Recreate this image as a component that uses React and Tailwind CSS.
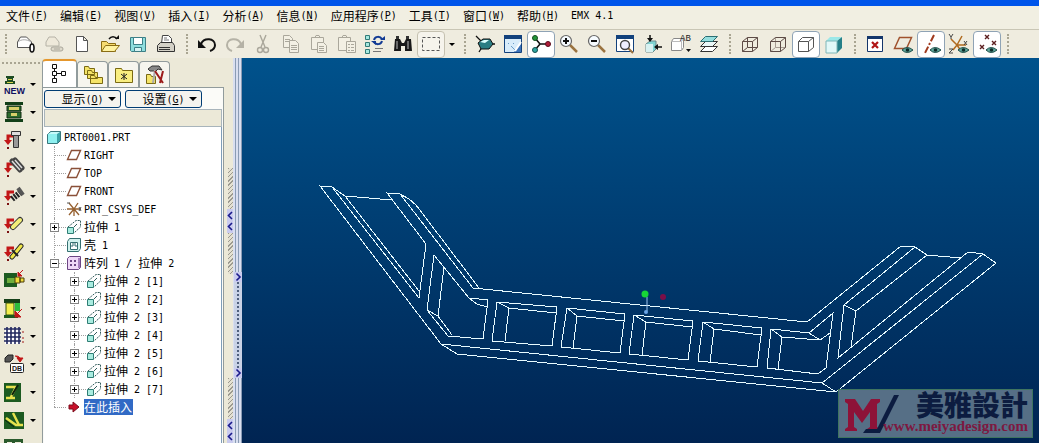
import clsx from 'clsx'

// 22x22 drawings for the top toolbar
const icons = {
  recall: (
    <>
      <path d="M2.500 14.500V9l3-5h6l5 5v5.500z" fill="#fff" stroke="#555" />
      <path d="M3 9c3-3 9-3 13 0" fill="none" stroke="#aaa" />
      <ellipse cx="17" cy="15" rx="2" ry="4" fill="#fff" stroke="#111" strokeWidth="1.600" />
    </>
  ),
  link: (
    <>
      <path d="M3 13V9l3-5h6l4 5v4z" fill="#eee9da" stroke="#b5b2a6" />
      <rect x="8" y="14" width="12" height="4" rx="2" fill="#ddd9cb" stroke="#aaa79b" />
      <path d="M11 16h6" stroke="#aaa79b" />
    </>
  ),
  page: <path d="M5.500 3.500h7l4 4v11h-11zM12.500 3.500v4h4" fill="#fff" stroke="#555" />,
  open: (
    <>
      <path d="M2.500 18.500V8.500h5l2 2h7v8z" fill="#f7dc70" stroke="#8a6d14" />
      <path d="M2.500 18.500l4-6h14l-5 6z" fill="#fff3a0" stroke="#8a6d14" />
      <path d="M10 6c2-3 6-3 8 0" fill="none" stroke="#111" strokeWidth="1.400" />
      <path d="M16 6h4v-4z" fill="#111" />
    </>
  ),
  save: (
    <>
      <path d="M3.500 4.500h15v14h-14l-1-1z" fill="#8fdede" stroke="#3d7f86" />
      <path d="M6.500 4.500h9v7h-9z" fill="#fff" stroke="#3d7f86" />
      <path d="M7.500 14.500h7v4h-7z" fill="#d7f3f3" stroke="#3d7f86" />
    </>
  ),
  print: (
    <>
      <path d="M6.500 10.500l1-8h6l3 3v5z" fill="#fff" stroke="#444" />
      <path d="M9 5h3M9 7h5" stroke="#777" />
      <path d="M2.500 12.500l3-3h12l2 3v6h-17z" fill="#d4d1c7" stroke="#333" />
      <path d="M4 14.500h11M4 16.500h11" stroke="#333" />
    </>
  ),
  undo: (
    <>
      <path d="M5 11c3-7 14-6 14 1 0 3-2 5-5 6" fill="none" stroke="#111" strokeWidth="2" />
      <path d="M2 7v8h8z" fill="#111" />
    </>
  ),
  redo: (
    <>
      <path d="M17 11c-3-7-14-6-14 1 0 3 2 5 5 6" fill="none" stroke="#b5b2a6" strokeWidth="2" />
      <path d="M20 7v8h-8z" fill="#b5b2a6" />
    </>
  ),
  cut: (
    <g fill="none" stroke="#aaa79b" strokeWidth="1.400">
      <path d="M8 2l5 12M14 2L9 14" />
      <circle cx="8" cy="17" r="2.500" />
      <circle cx="14" cy="17" r="2.500" />
    </g>
  ),
  copy: (
    <g fill="#f3f0e4" stroke="#aaa79b">
      <path d="M3.500 2.500h6l3 3v9h-9zM5 6.500h5M5 8.500h5" />
      <path d="M9.500 7.500h6l3 3v9h-9zM11 12.500h6M11 14.500h6M11 16.500h6" />
    </g>
  ),
  paste: (
    <g fill="#f3f0e4" stroke="#aaa79b">
      <path d="M3.500 4.500h12v12h-12zM7 4.500l1-2h3l1 2z" />
      <path d="M9.500 9.500h6l3 3v7h-9zM11 13.500h5M11 15.500h5M11 17.500h5" />
    </g>
  ),
  pasteSpecial: (
    <g fill="#f3f0e4" stroke="#aaa79b">
      <path d="M2.500 4.500h12v13h-12zM6 4.500l1-2h3l1 2z" />
      <path d="M10.500 8.500h9v11h-9zM12 11.500h2M15 11.500h3M12 14.500h2M15 14.500h3M12 17.500h2M15 17.500h3" />
    </g>
  ),
  regen: (
    <>
      <path d="M1.500 2.500h4v4h-4zM1.500 9.500h4v4h-4zM1.500 16.500h4v4h-4z" fill="#a6e8df" stroke="#317b78" />
      <path d="M10 7c1-4 6-4 8-1M18 8c-1 4-6 4-8 1" fill="none" stroke="#123a94" strokeWidth="2" />
      <path d="M16 7h5V3zM7 8h5v4z" fill="#123a94" />
      <path d="M11 15.500h8M9 18.500h8" stroke="#777" />
    </>
  ),
  find: (
    <>
      <path d="M3 6h5l2 4h2l2-4h5l1 12h-7v-5h-4v5H2z" fill="#181818" />
      <path d="M4 3h3v3H4zM14 3h3v3h-3z" fill="#333" />
      <path d="M5 8v8M16 8v8" stroke="#bbb" />
    </>
  ),
  select: <path d="M2.500 4.500h17v13h-17z" fill="none" stroke="#555" strokeDasharray="3 2" />,
  spin: (
    <>
      <path d="M2 3l6 6M5 19l5-8M14 11h7" stroke="#111" strokeWidth="1.300" />
      <path d="M4 10l5-4h7l3 5-4 5H7z" fill="#2a7d83" stroke="#111" />
      <path d="M6 9l4-2h5l-4 3z" fill="#dff" />
    </>
  ),
  sketch: (
    <>
      <path d="M2.500 3.500h17v16h-17z" fill="#d8ecfa" stroke="#12417c" />
      <path d="M2 2h18v4H2z" fill="#12417c" />
      <path d="M12 19L19 11v8z" fill="#3c73b8" />
      <path d="M6 10l1 1M9 13l5 5M12 10l-1 1" stroke="#6a9cc8" />
      <path d="M13 18l6-9" stroke="#fff" strokeWidth="2" />
    </>
  ),
  spinCenter: (
    <>
      <path d="M5 5l5 6M5 17l5-6h8" fill="none" stroke="#111" strokeWidth="1.600" />
      <circle cx="5" cy="5" r="2.500" fill="#24953a" stroke="#134d1e" />
      <circle cx="5" cy="17" r="2.500" fill="#2ea5a0" stroke="#134d4d" />
      <circle cx="18" cy="11" r="2.500" fill="#b01c38" stroke="#5a0d1c" />
    </>
  ),
  zoomIn: (
    <>
      <path d="M12 12l7 7" stroke="#9a7340" strokeWidth="2.500" />
      <circle cx="8" cy="8" r="5.500" fill="#f6fbff" stroke="#666" strokeWidth="1.200" />
      <path d="M5 8h6M8 5v6" stroke="#111" strokeWidth="2" />
    </>
  ),
  zoomOut: (
    <>
      <path d="M12 12l7 7" stroke="#9a7340" strokeWidth="2.500" />
      <circle cx="8" cy="8" r="5.500" fill="#f6fbff" stroke="#666" strokeWidth="1.200" />
      <path d="M5 8h6" stroke="#111" strokeWidth="2" />
    </>
  ),
  refit: (
    <>
      <path d="M2.500 3.500h17v15h-17z" fill="#fff" stroke="#12417c" />
      <path d="M2 2h18v4H2z" fill="#12417c" />
      <path d="M14 15l5 5" stroke="#9a7340" strokeWidth="2" />
      <circle cx="11" cy="12" r="4.500" fill="#eef" stroke="#444" strokeWidth="1.400" />
    </>
  ),
  orient: (
    <>
      <path d="M4 11l4-3h6v8l-3 3H4z" fill="#80d4d2" stroke="#6b8a8d" />
      <path d="M4 11h7v8H4z" fill="#d8f1f1" />
      <path d="M8 2v6M20 14h-6" stroke="#111" strokeWidth="1.500" />
      <path d="M5 5h6L8 9zM16 11v6l-4-3z" fill="#111" />
    </>
  ),
  views: (
    <>
      <path d="M1.500 8.500l2-3h10v9l-2 3h-10z" fill="#fff" stroke="#888" />
      <path d="M11.500 17.500v-9h-10M11.500 8.500l2-3" fill="none" stroke="#bbb" />
      <text x="10" y="8" fontSize="9" fill="#222" fontFamily="Liberation Mono, monospace">
        AB
      </text>
      <path d="M16 16h5l-2.500 3z" fill="#111" />
    </>
  ),
  layers: (
    <>
      <path d="M2.500 18.500l5-5h12l-5 5z" fill="#fff" stroke="#333" />
      <path d="M2.500 13.500l5-5h12l-5 5z" fill="#eaf7f7" stroke="#333" />
      <path d="M2.500 8.500l5-5h12l-5 5z" fill="#96dede" stroke="#2c6f73" />
    </>
  ),
  wireframe: (
    <path
      d="M3.500 8.500h10v10h-10zM8.500 4.500h10v10h-10zM3.500 8.500l5-4M13.500 8.500l5-4M3.500 18.500l5-4M13.500 18.500l5-4"
      fill="none"
      stroke="#5d4b46"
    />
  ),
  hiddenLine: (
    <>
      <path d="M8.500 4.500v10h10M3.500 18.500l5-4" fill="none" stroke="#a69b92" />
      <path d="M3.500 8.500h10v10h-10zM3.500 8.500l5-4h10v10l-5 4M13.500 8.500l5-4" fill="none" stroke="#5d4b46" />
    </>
  ),
  noHidden: <path d="M3.500 8.500h10v10h-10zM3.500 8.500l4-4h11v10l-5 4M13.500 8.500l5-4" fill="none" stroke="#555" />,
  shaded: (
    <>
      <path d="M3 8l4-4h12l-5 4z" fill="#9ce8e8" />
      <path d="M14 8l5-4v11l-5 5z" fill="#257f88" />
      <path d="M3 8h11v12H3z" fill="#e2f8f8" stroke="#7fb6b8" />
    </>
  ),
  closeWindow: (
    <>
      <path d="M3.500 3.500h15v15h-15z" fill="#fff" stroke="#14366b" />
      <path d="M3 3h16v3H3z" fill="#14366b" />
      <path d="M8 9l6 6M14 9l-6 6" stroke="#b01414" strokeWidth="2.200" />
    </>
  ),
  datumPlane: <path d="M2.500 15.500l5-11h12l-5 11z" fill="none" stroke="#a0522d" strokeWidth="1.500" />,
  datumAxis: <path d="M14 2L5 20" stroke="#a03a1e" strokeWidth="2" strokeDasharray="7 2 2 2" />,
  datumCsys: (
    <>
      <path d="M9 12l5-9M9 12L3 6M9 12h9M9 12l-4 5M9 12l4 6" stroke="#b06a1e" strokeWidth="1.500" />
      <path d="M1 1l2 3 2-3M3 4v2M16 8l3 4M19 8l-3 4M1 16h4l-4 4h4" fill="none" stroke="#444" />
    </>
  ),
  datumPoint: (
    <path
      d="M9 2l4 4M13 2L9 6M4 12l4 4M8 12l-4 4M16 8l4 4M20 8l-4 4"
      stroke="#5c1f1f"
      strokeWidth="1.400"
    />
  ),
}

const eye = (
  <>
    <path d="M10 17q5-5 11 0-6 5-11 0z" fill="#5fa79c" stroke="#1d4d48" />
    <circle cx="15.500" cy="17" r="1.800" fill="#0c2b28" />
  </>
)

const redHook = (
  <>
    <path d="M4 13V7h6" fill="none" stroke="#c21717" strokeWidth="3" />
    <path d="M0 11h8l-4 5z" fill="#c21717" />
    <path d="M3 18h2v2H3z" fill="#7a1010" />
  </>
)

// drawings for the mold-base bar on the left
const moldIcons = [
  {
    name: 'New project',
    art: (
      <>
        <path d="M2 3h8v2H2zM3 5h6v3H3zM1 8h10v3H1z" fill="#1e4c22" />
        <path d="M4 6h4v1H4zM3 9h6v1H3z" fill="#d6d34e" />
        <text x="0" y="21" fontSize="9" fontWeight="bold" fill="#101060" fontFamily="Liberation Sans, sans-serif">
          NEW
        </text>
      </>
    ),
  },
  {
    name: 'Mold base',
    art: (
      <>
        <path d="M1 1h18v3H1zM1 18h18v3H1z" fill="#123f18" />
        <path d="M3 5h14v5H3zM3 11h14v6H3z" fill="#2c6a2d" stroke="#102c12" />
        <path d="M5 6h10v3H5zM7 12h6v3H7z" fill="#d8cf6a" />
      </>
    ),
  },
  {
    name: 'Screw',
    art: (
      <>
        {redHook}
        <path d="M7.500 2.500h9v4h-9z" fill="#ddd" stroke="#333" />
        <path d="M9.500 6.500h5v12h-5z" fill="#999" stroke="#333" />
      </>
    ),
  },
  {
    name: 'Dowel pin',
    art: (
      <>
        {redHook}
        <path d="M8 4l8 9M11 3l7 8" stroke="#444" strokeWidth="5" strokeLinecap="round" />
        <path d="M8 4l8 9M11 3l7 8" stroke="#ddd" strokeWidth="1.500" />
      </>
    ),
  },
  {
    name: 'Ejector pin',
    art: (
      <>
        {redHook}
        <path d="M8 14L17 7" stroke="#222" strokeWidth="6" strokeDasharray="2 1" />
        <path d="M14 3l5 7" stroke="#555" strokeWidth="4" />
      </>
    ),
  },
  {
    name: 'Core pin',
    art: (
      <>
        {redHook}
        <path d="M9 14l7-7" stroke="#333" strokeWidth="6" strokeLinecap="round" />
        <path d="M9 14l7-7" stroke="#f2ee78" strokeWidth="4" strokeLinecap="round" />
      </>
    ),
  },
  {
    name: 'Sleeve',
    art: (
      <>
        {redHook}
        <path d="M8 16l9-11" stroke="#222" strokeWidth="5" strokeLinecap="round" />
        <path d="M8 16l9-11" stroke="#efe648" strokeWidth="3" strokeLinecap="round" />
        <path d="M8 9l6 6" stroke="#222" strokeWidth="2" />
      </>
    ),
  },
  {
    name: 'Slider',
    art: (
      <>
        <path d="M0 4h13v14H0z" fill="#1c5a20" />
        <path d="M3 9h8v5H3z" fill="#6fae3c" />
        <path d="M11 8h5v6h-5zM16 9h4v4h-4z" fill="#f0dc3c" stroke="#4b3c08" />
        <path d="M19 1l-4 4M14 3v4h4z" fill="#c21717" stroke="#c21717" />
      </>
    ),
  },
  {
    name: 'Lifter',
    art: (
      <>
        <path d="M0 2h16v4H0z" fill="#153f18" />
        <path d="M2 6h8v12H2z" fill="#f4ef4e" stroke="#36520f" />
        <path d="M11 6h5v8h-5z" fill="#2dbd3d" />
        <path d="M0 18h14v3H0z" fill="#1c5a20" />
        <path d="M18 12l-5 5M11 14v6h6z" fill="#c21717" stroke="#c21717" />
      </>
    ),
  },
  {
    name: 'Cooling',
    art: (
      <>
        <path d="M1 3h15v16H1z" fill="#fff" />
        <path d="M0 4h17M0 8h17M0 12h17M0 16h17M3 2v17M7 2v17M11 2v17M15 2v17" stroke="#22285f" strokeWidth="1.600" />
        <path d="M18 7h2M18 13h2M18 17h2" stroke="#a01818" />
      </>
    ),
  },
  {
    name: 'Database',
    art: (
      <>
        <path d="M1 5l3-3h5v4L6 9H1z" fill="#555" stroke="#222" />
        <path d="M11 3c4 0 5 1 5 4M13 5h6l-3 4z" fill="#c21717" stroke="#c21717" />
        <rect x="6.500" y="10.500" width="13" height="9" rx="1" fill="#fff" stroke="#222" />
        <text x="8" y="18" fontSize="7" fontWeight="bold" fill="#222" fontFamily="Liberation Sans, sans-serif">
          DB
        </text>
      </>
    ),
  },
  {
    name: 'Open mold',
    art: (
      <>
        <path d="M0 2h17v19H0z" fill="#1c5a20" />
        <path d="M2 6h10L7 16M2 17h9" fill="none" stroke="#e6e24e" strokeWidth="2.500" />
        <path d="M14 4L8 14" stroke="#0b220c" strokeWidth="2" />
      </>
    ),
  },
  {
    name: 'Ejection',
    art: (
      <>
        <path d="M0 3h20v17H0z" fill="#1c5a20" />
        <path d="M2 9l10 7h7M9 4l6 12" fill="none" stroke="#e6e24e" strokeWidth="2.500" />
        <path d="M1 11l9 7" stroke="#0b220c" />
      </>
    ),
  },
  { name: 'Parts list', art: <path d="M0 2h19v18H0zM3 5h5v3H3zM11 5h6v3h-6z" fill="#2a5a2c" fillRule="evenodd" /> },
]

const menus = [
  ['文件', 'F'],
  ['编辑', 'E'],
  ['视图', 'V'],
  ['插入', 'I'],
  ['分析', 'A'],
  ['信息', 'N'],
  ['应用程序', 'P'],
  ['工具', 'T'],
  ['窗口', 'W'],
  ['帮助', 'H'],
]

const toolGroups = [
  ['recall', 'link', 'page', 'open', 'save', 'print'],
  ['undo', 'redo', 'cut', 'copy', 'paste', 'pasteSpecial', 'regen', 'find', 'select'],
  ['spin', 'sketch', 'spinCenter', 'zoomIn', 'zoomOut', 'refit', 'orient', 'views', 'layers'],
  ['wireframe', 'hiddenLine', 'noHidden', 'shaded'],
  ['closeWindow', 'datumPlane', 'datumAxis', 'datumCsys', 'datumPoint'],
]
const pressed = ['spinCenter', 'noHidden', 'datumAxis', 'datumPoint']
const withEye = ['datumPlane', 'datumAxis', 'datumCsys', 'datumPoint']

const treeIcons = {
  part: (
    <>
      <path d="M1.500 5.500l3-3h10v9l-3 3h-10z" fill="#3ba3a8" stroke="#38777c" />
      <path d="M2 5h9v9H2z" fill="#8ff0f0" />
      <path d="M2 5l3-2h9l-3 2z" fill="#c6fafa" />
    </>
  ),
  plane: <path d="M1.500 12.500l4-9h9l-4 9z" fill="none" stroke="#8a5038" strokeWidth="1.400" />,
  csys: (
    <>
      <path d="M8 8L3 2M8 8l4-6M1 8h14M8 8l-5 6M8 8l5 6M8 8v7" stroke="#96602f" strokeWidth="1.300" />
      <path d="M13 6l2 4M15 6l-2 4M1 2h3" stroke="#555" />
    </>
  ),
  extrude: (
    <>
      <path d="M2 8L10 1.500h4.500V8L8 14" fill="none" stroke="#335c5c" strokeDasharray="2 1" />
      <path d="M1.500 8.500h6v6h-6z" fill="#a9ece0" stroke="#2f7d74" />
      <path d="M8 8l3-3" fill="none" stroke="#335c5c" />
    </>
  ),
  shell: (
    <>
      <path d="M1.500 4.500l2-3h11v10l-2 3h-11z" fill="#d3f2ee" stroke="#356f70" />
      <path d="M4.500 5.500h7v7h-7z" fill="#fff" stroke="#356f70" />
      <path d="M7 6v3H5M9 6v3h2" fill="none" stroke="#356f70" />
    </>
  ),
  pattern: (
    <>
      <path d="M1.500 3.500l2-2h11v11l-2 2h-11z" fill="#f0d8f8" stroke="#6b4583" />
      <path d="M13 3v10" stroke="#a77fc0" strokeWidth="2" />
      <path d="M4 5h2v2H4zM8 5h2v2H8zM4 9h2v2H4zM8 9h2v2H8z" fill="#6b4583" />
    </>
  ),
  insert: <path d="M3 6h4V3l6 5-6 5v-3H3z" fill="#c8102a" stroke="#7c0c1c" />,
}

const tree = [
  { icon: 'plane', label: 'RIGHT' },
  { icon: 'plane', label: 'TOP' },
  { icon: 'plane', label: 'FRONT' },
  { icon: 'csys', label: 'PRT_CSYS_DEF' },
  { icon: 'extrude', label: '拉伸 1', sign: '+' },
  { icon: 'shell', label: '壳 1' },
  {
    icon: 'pattern',
    label: '阵列 1 / 拉伸 2',
    sign: '-',
    children: [1, 2, 3, 4, 5, 6, 7].map((n) => ({ icon: 'extrude', label: `拉伸 2 [${n}]`, sign: '+' })),
  },
  { icon: 'insert', label: '在此插入', selected: true },
]

const modelPaths = [
  // left arm
  'M441 344L320 186L332 187L345 196L392 200',
  'M332 187L419 298L426 244L387 193L400 194L409 199L416 205L479 288',
  'M345 196L419 291',
  'M400 194L473 288',
  'M434 255L427 310L448 336L483 339L488 300L469 298Z',
  'M444 267L438 316L452 335M427 310L438 316',
  'M469 298L477 304L487 307',
  // pockets
  'M497 302L492 341L552 346L557 307ZL509 308L505 341M509 308L556 313',
  'M567 308L561 347L620 353L625 314ZL577 316L573 348M577 316L624 321',
  'M634 315L629 354L688 360L693 321ZL646 322L642 355M646 322L692 327',
  'M703 322L698 361L757 367L762 328ZL714 329L710 362M714 329L761 335',
  'M771 329L767 368L818 374L826 368L833 313L809 333ZL782 337L778 369M782 337L820 340',
  'M809 333L820 340L830 333',
  // rails
  'M473 288L807 322L901 246L915 247L927 255L961 258',
  'M441 344L822 383L836 392L457 354Z',
  // right arm
  'M915 247L844 305L838 358L968 252L983 254L996 263L836 392',
  'M844 305L856 311L851 347M927 255L856 311',
  'M983 254L822 383',
]

// Chinese runs sit at 12px, Latin runs at half that width
function Label({ children }) {
  return children.split(/([\u4e00-\u9fff]+)/).map((run, i) => (
    <span
      key={i}
      className={i % 2 ? "text-xs font-['Noto_Sans_CJK_SC',sans-serif]" : "text-[10px] font-['DejaVu_Sans_Mono',monospace]"}
    >
      {run}
    </span>
  ))
}

function Mnemonic({ text, letter }) {
  return (
    <>
      <Label>{text}</Label>
      <span className="text-[10px] font-['DejaVu_Sans_Mono',monospace]">
        (<u>{letter}</u>)
      </span>
    </>
  )
}

function Caret() {
  return <span className="border-x-3 border-t-3 border-x-transparent border-t-black" />
}

function Grip() {
  return (
    <span className="flex w-[13px] shrink-0 justify-center">
      <span className="h-5 border-l-2 border-dotted border-[#a9a592]" />
    </span>
  )
}

function buttonLook(name) {
  if (pressed.includes(name)) return 'border-[#8fa3b5] bg-white'
  if (name === 'select') return 'border-[#c5c1b0] bg-[#f6f4ec]'
  return 'border-transparent'
}

function ToolButton({ name }) {
  return (
    <button
      aria-label={name}
      className={clsx('flex h-[27px] w-7 shrink-0 items-center justify-center rounded-sm border', buttonLook(name))}
    >
      <svg viewBox="0 0 22 22" className="size-[22px] shrink-0">
        {icons[name]}
        {withEye.includes(name) && eye}
      </svg>
    </button>
  )
}

function TreeRow({ icon, label, sign, selected, children }) {
  return (
    <li
      className={clsx(
        'relative before:absolute before:top-0 before:left-[10px] before:border-l before:border-dotted before:border-[#a0a0a0]',
        selected ? 'before:h-[9px]' : 'before:h-full',
      )}
    >
      <div className="flex h-[18px] items-center pl-1.5 whitespace-pre">
        <span className="flex w-4 shrink-0 items-center">
          {sign ? (
            <button
              aria-label={sign === '+' ? 'Expand' : 'Collapse'}
              className="relative flex size-[9px] shrink-0 items-center justify-center border border-[#848484] bg-white"
            >
              <svg viewBox="0 0 7 7" className="size-[7px] shrink-0">
                <path d={sign === '+' ? 'M1 3.500h5M3.500 1v5' : 'M1 3.500h5'} stroke="#000" />
              </svg>
            </button>
          ) : (
            <span className="w-1 shrink-0" />
          )}
          <span className="grow border-t border-dotted border-[#a0a0a0]" />
        </span>
        <svg viewBox="0 0 16 16" className="size-4 shrink-0">
          {treeIcons[icon]}
        </svg>
        <span className={clsx('ml-0.5 flex h-4 items-center', selected && 'bg-[#316ac5] pr-px text-white')}>
          <Label>{label}</Label>
        </span>
      </div>
      {children && (
        <ul className="pl-5">
          {children.map((row) => (
            <TreeRow key={row.label} {...row} />
          ))}
        </ul>
      )}
    </li>
  )
}

const tabs = [
  <path
    key="t"
    d="M3.500 1.500h4v4h-4zM3.500 8.500h4v4h-4zM12.500 8.500h4v4h-4zM3.500 15.500h4v4h-4zM5.500 5.500v3M5.500 12.500v3M7.500 10.500h5"
    fill="#fff"
    stroke="#111"
  />,
  <path
    key="f"
    d="M2.500 10.500v-8h4l1 2h5v6zM5.500 14.500v-8h4l1 2h5v6zM8.500 19.500v-8h4l1 2h7v6z"
    fill="#f5e468"
    stroke="#7b6a13"
  />,
  <g key="s">
    <path d="M2.500 18.500v-14h6l1 2h10v12z" fill="#f9ee80" stroke="#7b6a13" />
    <path d="M11 9v7M8 10l6 5M14 10l-6 5" stroke="#222" />
  </g>,
  <g key="h">
    <path d="M2.500 19.500v-9h4l1 2h4v7z" fill="#f5e468" stroke="#7b6a13" />
    <path d="M4 5l4-3h7l3 4-4-1-2 2H6z" fill="#888" stroke="#333" />
    <path d="M11 6l-2 13" stroke="#aaa" strokeWidth="2" />
    <path d="M11 7l8 12M19 7l-3 12" stroke="#9c1c1c" strokeWidth="2" />
  </g>,
]

function ModelTree() {
  return (
    <aside className="flex w-[182px] shrink-0 flex-col">
      <div className="flex h-[29px] items-end pt-px" role="tablist">
        {tabs.map((art, i) => (
          <button
            key={i}
            role="tab"
            aria-label={`Navigator ${i + 1}`}
            aria-selected={i === 0}
            className={clsx(
              'flex items-center justify-center rounded-t-sm border border-b-0 border-[#919b9c]',
              i === 0 ? 'h-7 w-[35px] border-t-2 border-t-[#e5972d] bg-white' : 'h-[26px] w-[31px] bg-[#f6f5ee]',
            )}
          >
            <svg viewBox="0 0 22 22" className="size-[22px] shrink-0">{art}</svg>
          </button>
        ))}
      </div>
      <div className="flex min-h-0 grow flex-col border-x border-t border-[#919b9c] bg-[#fbfbf8] px-px">
        <div className="flex gap-1 pt-[2px]">
          {[['显示', 'O'], ['设置', 'G']].map(([text, letter]) => (
            <button
              key={text}
              className="flex h-[18px] w-[77px] items-center justify-center gap-1 rounded-[3px] border border-[#003c74] bg-[#f4f3ee] pl-3"
            >
              <span className="flex items-center">
                <Mnemonic text={text} letter={letter} />
              </span>
              <span className="border-x-4 border-t-4 border-x-transparent border-t-black" />
            </button>
          ))}
        </div>
        <div className="mt-px h-[18px] shrink-0 border border-[#a8b4bb] bg-[#ece9d8]" />
        <div className="min-h-0 grow overflow-hidden border-r border-[#7f9db9] bg-white">
          <div className="flex h-[19px] items-center pt-px pl-[2px]">
            <svg viewBox="0 0 16 16" className="size-4 shrink-0">{treeIcons.part}</svg>
            <span className="ml-0.5 flex">
              <Label>PRT0001.PRT</Label>
            </span>
          </div>
          <ul>
            {tree.map((row) => (
              <TreeRow key={row.label} {...row} />
            ))}
          </ul>
        </div>
      </div>
    </aside>
  )
}

function Hatch() {
  return <div className="h-[41px] w-[5px] shrink-0 bg-[repeating-linear-gradient(135deg,#9c9a90_0_1px,#e4e1d2_1px_3px)]" />
}

function Chevrons() {
  return (
    <svg viewBox="0 0 6 24" className="h-6 w-1.5 shrink-0 bg-[#c9cbee]" fill="none" stroke="#1a1a8c" strokeWidth="1.600">
      <path d="M5 3L1.500 6.500L5 10M5 14l-3.500 3.500L5 21" />
    </svg>
  )
}

function RightChevron() {
  return (
    <svg viewBox="0 0 8 10" className="h-2.5 w-2 shrink-0 bg-[#c9cbee]" fill="none" stroke="#1a1a8c" strokeWidth="1.600">
      <path d="M2.500 1.500L6 5L2.500 8.500" />
    </svg>
  )
}

// the two drag bars between the tree and the model window
function Sashes() {
  return (
    <>
      <div className="flex w-[9px] shrink-0 flex-col items-end overflow-hidden pt-[110px]">
        <Hatch />
        <Chevrons />
        <Hatch />
        <div className="h-[104px] shrink-0" />
        <Hatch />
        <Chevrons />
      </div>
      <div className="flex w-[9px] shrink-0 flex-col items-center overflow-hidden bg-[repeating-linear-gradient(90deg,#d9dff0_0_2px,#8b9cb5_2px_3px)]">
        <div className="h-[214px] shrink-0" />
        <RightChevron />
        <div className="h-[86px] w-2 shrink-0 bg-[#c9d2e6] px-[3px]">
          <div className="h-full border-l-2 border-dotted border-[#4f5f7c]" />
        </div>
        <RightChevron />
      </div>
    </>
  )
}

function Watermark() {
  return (
    <div className="absolute right-[6px] bottom-[5px] flex h-[49px] w-[195px] border border-[#3f7560] bg-[#566f86] pr-1 pl-1.5">
      <svg viewBox="0 0 54 47" className="h-[47px] w-[54px] shrink-0">
        <path d="M0 9h10l8 12 8-12h9v3l-3 2v23l3 2v2H22v-2l3-2V22l-8 11-8-11v15l3 2v2H0v-2l3-2V14l-3-2z" fill="#8d1238" />
        <path d="M54 5L35 43H18l3-4h11L49 5z" fill="#0c1c40" />
      </svg>
      <div className="-ml-4 flex grow flex-col items-end">
        <span className="text-[28px] leading-7 font-black text-[#0c1c40] font-['Noto_Sans_CJK_TC',sans-serif]">美雅設計</span>
        <span className="text-[15px] leading-4 font-bold text-[#7d1840] font-['Liberation_Serif',serif]">
          www.meiyadesign.com
        </span>
      </div>
    </div>
  )
}

export default function App() {
  return (
    <div className="flex h-screen flex-col overflow-hidden bg-[#ece9d8] text-black">
      <div className="h-1.5 shrink-0 bg-[#0055ea]" />
      <nav className="flex h-[23px] shrink-0 items-center gap-3 bg-[#f1efe2] px-1.5 pb-1">
        {menus.map(([text, letter]) => (
          <button key={letter} className="flex h-5 shrink-0 items-center">
            <Mnemonic text={text} letter={letter} />
          </button>
        ))}
        <button className="flex h-5 shrink-0 items-center whitespace-pre">
          <Label>EMX 4.1</Label>
        </button>
      </nav>

      <div className="flex h-[29px] shrink-0 items-center border-t border-[#c9c6b5] bg-[#efecdf]">
        <span className="-ml-px">
          <Grip />
        </span>
        {toolGroups.map((group, i) => (
          <div key={i} className="flex items-center">
            {group.map((name) => (
              <ToolButton key={name} name={name} />
            ))}
            {i === 1 && (
              <span className="flex w-[13px] justify-center">
                <Caret />
              </span>
            )}
            <Grip />
          </div>
        ))}
      </div>

      <div className="flex min-h-0 grow">
        {/* mold-base tools */}
        <div className="flex w-[42px] shrink-0 flex-col overflow-hidden">
          <span className="mx-0.5 mt-1 mb-1.5 shrink-0 border-t-2 border-dotted border-[#a9a592]" />
          {moldIcons.map(({ name, art }) => (
            <button key={name} aria-label={name} className="flex h-7 shrink-0 items-center gap-1 pl-1">
              <svg viewBox="0 0 22 22" className="size-[22px] shrink-0">{art}</svg>
              <Caret />
            </button>
          ))}
        </div>

        <ModelTree />
        <Sashes />

        <main className="relative min-w-0 grow overflow-hidden bg-linear-to-b from-[#00528c] to-[#002452]">
          <svg viewBox="242 58 797 385" preserveAspectRatio="xMinYMin slice" className="size-full">
            <g fill="none" stroke="#e8fbff" shapeRendering="crispEdges">
              {modelPaths.map((d) => (
                <path key={d} d={d} />
              ))}
            </g>
            <path d="M647 297v14" stroke="#9cc4ee" />
            <circle cx="646" cy="312" r="2" fill="#6aa5e6" />
            <circle cx="645" cy="294" r="3.500" fill="#16d636" />
            <circle cx="663" cy="297" r="3" fill="#7a0f48" />
          </svg>
          <Watermark />
        </main>
      </div>
    </div>
  )
}
